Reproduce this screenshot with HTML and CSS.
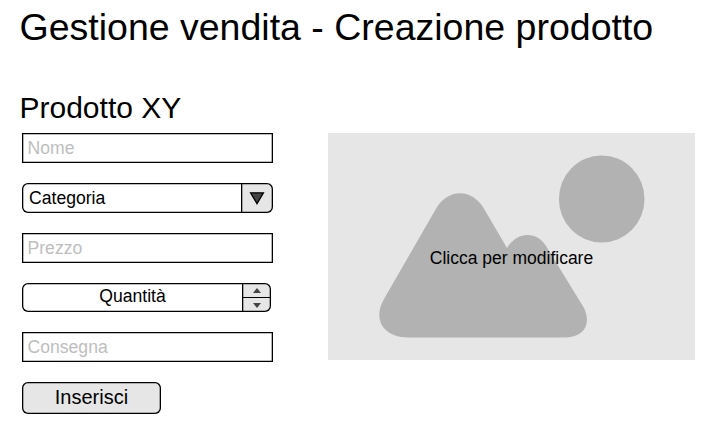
FILE: index.html
```html
<!DOCTYPE html>
<html lang="it">
<head>
<meta charset="utf-8">
<title>Gestione vendita</title>
<link rel="stylesheet" href="styles.css">
</head>
<body>
<h1 class="title">Gestione vendita - Creazione prodotto</h1>
<h2 class="subtitle">Prodotto XY</h2>
<main class="content">
  <form class="form">
    <div class="field placeholder">Nome</div>
    <div class="field select">
      <span class="select-label">Categoria</span>
      <span class="select-arrow">
        <svg width="16" height="14" viewBox="0 0 16 14"><path d="M1.6 1.8h12.8L8 12.6z" fill="#444" stroke="#000" stroke-width="1.3"/></svg>
      </span>
    </div>
    <div class="field placeholder">Prezzo</div>
    <div class="field spinner">
      <span class="spinner-label">Quantità</span>
      <span class="spinner-buttons">
        <span class="step"><svg width="8" height="5" viewBox="0 0 8 5"><path d="M0 5h8L4 0z" fill="#444"/></svg></span>
        <span class="step"><svg width="8" height="5" viewBox="0 0 8 5"><path d="M0 0h8L4 5z" fill="#444"/></svg></span>
      </span>
    </div>
    <div class="field placeholder">Consegna</div>
    <button class="submit" type="button">Inserisci</button>
  </form>
  <div class="picture">
    <svg class="landscape" width="367" height="227" viewBox="328 133 367 227">
      <ellipse cx="601.7" cy="199" rx="42.8" ry="43.6"/>
      <path d="M437 207C449 188.500 471 188.500 483 207L507 248C517 231 537 231 546 246L584 308C592 325 583 337.500 566 337.500H408C384 337.500 372 320 384 299Z"/>
    </svg>
    <span class="caption">Clicca per modificare</span>
  </div>
</main>
</body>
</html>
```
FILE: styles.css
```css
* { box-sizing: border-box; }
body {
  margin: 0;
  padding: 5px 0 0 19.5px;
  background: #fff;
  color: #000;
  font-family: "Liberation Sans", Arial, sans-serif;
  font-size: 17.6px;
}
.title, .subtitle { margin: 0; font-weight: 400; white-space: nowrap; }
.title { height: 82px; font-size: 37.5px; line-height: 44px; }
.subtitle { height: 46px; font-size: 30px; line-height: 42px; }
.content { display: flex; align-items: flex-start; gap: 55px; padding-left: 2.5px; }
.form { width: 251px; display: flex; flex-direction: column; align-items: flex-start; }
.field {
  width: 251px;
  height: 30px;
  margin-bottom: 20px;
  line-height: 30px;
  box-shadow: inset 0 0 0 1.3px #000;
}
.placeholder { padding-left: 5.5px; color: #bebebe; }
.select, .spinner { display: flex; border-radius: 6px; overflow: hidden; }
.select-label { flex: 1; padding-left: 7px; }
.select-arrow {
  width: 32px;
  display: flex;
  align-items: center;
  justify-content: center;
  background: #e6e6e6;
  border-radius: 0 6px 6px 0;
  box-shadow: inset 0 0 0 1.3px #000;
}
.spinner { width: 249px; height: 29px; }
.spinner-label { flex: 1; padding-left: 1px; line-height: 27px; text-align: center; }
.spinner-buttons {
  width: 29px;
  display: flex;
  flex-direction: column;
  background: #e6e6e6;
  border-radius: 0 6px 6px 0;
  box-shadow: inset 0 0 0 1.3px #000;
}
.step { flex: 1; display: flex; align-items: center; justify-content: center; }
.step + .step { border-top: 1px solid #000; }
.submit {
  width: 139px;
  height: 32px;
  padding: 0 0 2px;
  border: 0;
  border-radius: 6px;
  background: #e6e6e6;
  box-shadow: inset 0 0 0 1.3px #000;
  color: #000;
  font: 20px "Liberation Sans", Arial, sans-serif;
}
.picture {
  position: relative;
  width: 367px;
  height: 227px;
  display: flex;
  align-items: center;
  justify-content: center;
  background: #e6e6e6;
}
.landscape { position: absolute; left: 0; top: 0; fill: #b2b2b2; }
.caption { position: relative; top: 12px; font-size: 17.5px; white-space: nowrap; }
```
